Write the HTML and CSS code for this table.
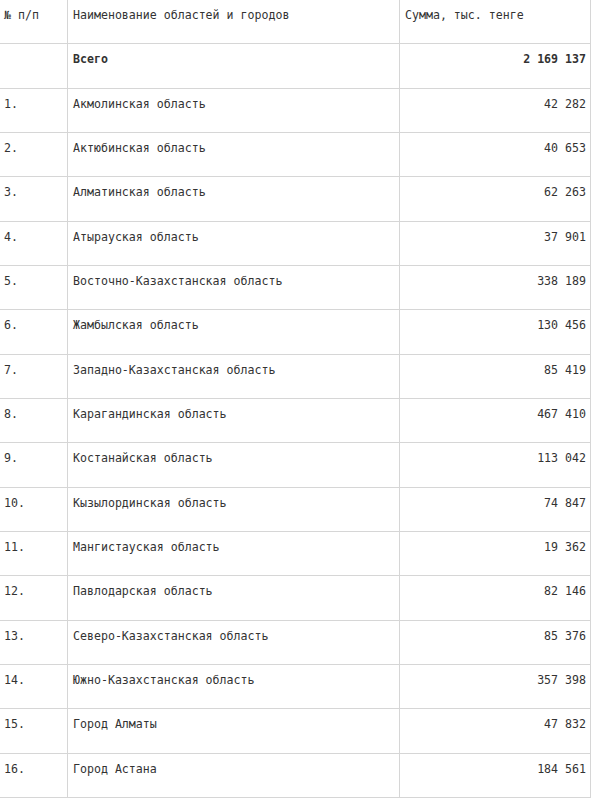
FILE: index.html
```html
<!DOCTYPE html>
<html lang="ru">
<head>
<meta charset="utf-8">
<link rel="stylesheet" href="styles.css">
</head>
<body>
<table class="report">
  <colgroup><col class="c-num"><col class="c-name"><col class="c-sum"></colgroup>
  <tr><td>№ п/п</td><td>Наименование областей и городов</td><td>Сумма, тыс. тенге</td></tr>
  <tr class="total"><td></td><td>Всего</td><td class="num">2 169 137</td></tr>
  <tr><td>1.</td><td>Акмолинская область</td><td class="num">42 282</td></tr>
  <tr><td>2.</td><td>Актюбинская область</td><td class="num">40 653</td></tr>
  <tr><td>3.</td><td>Алматинская область</td><td class="num">62 263</td></tr>
  <tr><td>4.</td><td>Атырауская область</td><td class="num">37 901</td></tr>
  <tr><td>5.</td><td>Восточно-Казахстанская область</td><td class="num">338 189</td></tr>
  <tr><td>6.</td><td>Жамбылская область</td><td class="num">130 456</td></tr>
  <tr><td>7.</td><td>Западно-Казахстанская область</td><td class="num">85 419</td></tr>
  <tr><td>8.</td><td>Карагандинская область</td><td class="num">467 410</td></tr>
  <tr><td>9.</td><td>Костанайская область</td><td class="num">113 042</td></tr>
  <tr><td>10.</td><td>Кызылординская область</td><td class="num">74 847</td></tr>
  <tr><td>11.</td><td>Мангистауская область</td><td class="num">19 362</td></tr>
  <tr><td>12.</td><td>Павлодарская область</td><td class="num">82 146</td></tr>
  <tr><td>13.</td><td>Северо-Казахстанская область</td><td class="num">85 376</td></tr>
  <tr><td>14.</td><td>Южно-Казахстанская область</td><td class="num">357 398</td></tr>
  <tr><td>15.</td><td>Город Алматы</td><td class="num">47 832</td></tr>
  <tr><td>16.</td><td>Город Астана</td><td class="num">184 561</td></tr>
</table>
</body>
</html>
```
FILE: styles.css
```css
html, body {
  margin: 0;
  padding: 0;
  background: #fff;
}
.report {
  border-collapse: collapse;
  width: 591px;
  margin: -1px 0 0 -1px;
  table-layout: fixed;
  font-family: "DejaVu Sans Mono", "Liberation Mono", monospace;
  font-size: 11.6px;
  line-height: 14px;
  color: #333;
}
.c-num { width: 68px; }
.c-name { width: 332px; }
.c-sum { width: 191px; }
.report td {
  border: 1px solid #d6d6d6;
  height: 44.33px;
  box-sizing: border-box;
  padding: 8px 4px 0 5px;
  vertical-align: top;
  white-space: nowrap;
}
.report td:first-child { padding-left: 4px; }
.report .num { text-align: right; }
.total td { font-weight: bold; }
```
